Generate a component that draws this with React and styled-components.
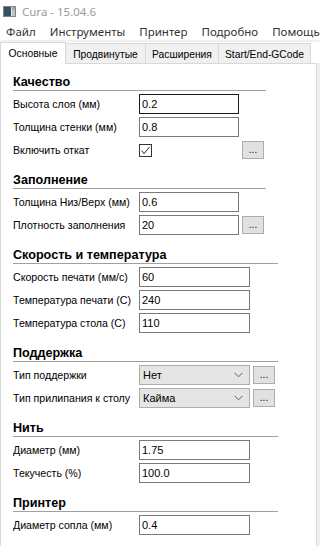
import React from 'react';
import styled, { createGlobalStyle } from 'styled-components';

const Global = createGlobalStyle`
  html, body { margin: 0; padding: 0; background: #fff; overflow: hidden; }
  #root { width: 320px; height: 546px; }
`;

const Window = styled.div`
  width: 320px;
  height: 546px;
  display: flex;
  flex-direction: column;
  background: #fff;
  overflow: hidden;
  font-family: "Liberation Sans", Arial, sans-serif;
`;

const TitleBar = styled.div`
  height: 22px;
  flex-shrink: 0;
  display: flex;
  align-items: center;
  gap: 6px;
  padding-left: 3px;
`;

const TitleText = styled.span`
  font-family: "Noto Sans", sans-serif;
  font-size: 11.5px;
  color: #9a9a9a;
`;

const MenuBar = styled.div`
  height: 18px;
  flex-shrink: 0;
  display: flex;
  align-items: center;
  gap: 14px;
  padding-left: 6px;
  white-space: nowrap;
  overflow: hidden;
`;

const MenuItem = styled.span`
  font-family: "Noto Sans", sans-serif;
  font-size: 11.5px;
  color: #333;
`;

const Separator = styled.div`
  height: 2px;
  flex-shrink: 0;
  background: #f0f0f0;
`;

const TabRow = styled.div`
  height: 21px;
  flex-shrink: 0;
  display: flex;
  align-items: flex-end;
  position: relative;
  z-index: 1;
`;

const Tab = styled.div`
  box-sizing: border-box;
  width: ${p => p.$w}px;
  height: ${p => (p.$active ? 22 : 20)}px;
  margin-bottom: ${p => (p.$active ? -1 : 0)}px;
  background: ${p => (p.$active ? '#fff' : '#f0f0f0')};
  border: 1px solid #d9d9d9;
  border-bottom: none;
  border-left: ${p => (p.$first ? '1px solid #d9d9d9' : 'none')};
  display: flex;
  align-items: center;
  justify-content: center;
  font-size: 10.3px;
  color: #000;
  white-space: nowrap;
  padding-top: ${p => (p.$active ? 0 : 1)}px;
`;

const Body = styled.div`
  flex: 1;
  display: flex;
  background: #f0f0f0;
  min-height: 0;
`;

const Panel = styled.div`
  box-sizing: border-box;
  width: 317px;
  background: #fff;
  border: 1px solid #d9d9d9;
  border-bottom: none;
  padding: 10px 0 0 12px;
  display: flex;
  flex-direction: column;
  gap: 12px;
`;

const Section = styled.section`
  display: flex;
  flex-direction: column;
`;

const SectionTitle = styled.div`
  height: 16px;
  line-height: 16px;
  font-weight: bold;
  font-size: 12.6px;
  color: #000;
  white-space: nowrap;
`;

const Rule = styled.div`
  width: ${p => p.$w}px;
  height: 1px;
  background: #a0a0a0;
`;

const Rows = styled.div`
  margin-top: 3px;
  display: flex;
  flex-direction: column;
  gap: 3px;
`;

const Row = styled.div`
  height: 20px;
  display: flex;
  align-items: center;
`;

const Label = styled.span`
  width: 126px;
  flex-shrink: 0;
  font-size: 10.6px;
  color: #000;
  white-space: nowrap;
  overflow: hidden;
`;

const Field = styled.input`
  box-sizing: border-box;
  width: ${p => p.$w}px;
  height: 20px;
  margin: 0;
  padding: 0 2px;
  border: 1px solid ${p => (p.$focus ? '#1a1a1a' : '#7a7a7a')};
  border-radius: 0;
  outline: none;
  background: #fff;
  font-family: "Liberation Sans", Arial, sans-serif;
  font-size: 11px;
  color: #000;
`;

const Slot = styled.div`
  width: ${p => p.$w}px;
  height: 20px;
  display: flex;
  align-items: center;
`;

const CheckBox = styled.div`
  box-sizing: border-box;
  width: 13px;
  height: 13px;
  border: 1px solid #333;
  background: #fff;
  display: flex;
  align-items: center;
  justify-content: center;
`;

const Select = styled.div`
  box-sizing: border-box;
  width: ${p => p.$w}px;
  height: 20px;
  border: 1px solid #adadad;
  background: #e5e5e5;
  display: flex;
  align-items: center;
  justify-content: space-between;
  padding: 0 6px 0 3px;
  font-size: 11px;
  color: #000;
`;

const DotsButton = styled.div`
  box-sizing: border-box;
  width: 22px;
  height: 18px;
  margin-left: 3px;
  border: 1px solid #adadad;
  background: #e1e1e1;
  display: flex;
  align-items: flex-end;
  justify-content: center;
  font-size: 10px;
  color: #000;
  line-height: 1;
  padding-bottom: 3px;
`;

const AppIcon = () => (
  <svg width="13" height="11" viewBox="0 0 13 11">
    <rect x="0.5" y="0.5" width="12" height="10" fill="#e6e9ea" stroke="#7f8487" />
    <rect x="1" y="1" width="7" height="9" fill="#36505e" />
    <rect x="9" y="1" width="3" height="3" fill="#8fb59a" />
    <rect x="9" y="4" width="3" height="6" fill="#b9c4c9" />
  </svg>
);

const Check = () => (
  <svg width="11" height="11" viewBox="0 0 11 11">
    <polyline points="1.5,5.5 4,8.5 9.5,2" fill="none" stroke="#4a4a4a" strokeWidth="1.1" />
  </svg>
);

const Chevron = () => (
  <svg width="9" height="6" viewBox="0 0 9 6">
    <polyline points="0.5,0.8 4.5,4.8 8.5,0.8" fill="none" stroke="#606060" strokeWidth="1" />
  </svg>
);

const Dots = () => <DotsButton>...</DotsButton>;

const sections = [
  {
    title: 'Качество',
    w: 100,
    rule: 253,
    rows: [
      { label: 'Высота слоя (мм)', value: '0.2', focus: true },
      { label: 'Толщина стенки (мм)', value: '0.8' },
      { label: 'Включить откат', check: true, dots: true },
    ],
  },
  {
    title: 'Заполнение',
    w: 100,
    rule: 253,
    rows: [
      { label: 'Толщина Низ/Верх (мм)', value: '0.6' },
      { label: 'Плотность заполнения', value: '20', dots: true },
    ],
  },
  {
    title: 'Скорость и температура',
    w: 111,
    rule: 265,
    rows: [
      { label: 'Скорость печати (мм/с)', value: '60' },
      { label: 'Температура печати (C)', value: '240' },
      { label: 'Температура стола (C)', value: '110' },
    ],
  },
  {
    title: 'Поддержка',
    w: 111,
    rule: 265,
    rows: [
      { label: 'Тип поддержки', select: 'Нет', dots: true },
      { label: 'Тип прилипания к столу', select: 'Кайма', dots: true },
    ],
  },
  {
    title: 'Нить',
    w: 111,
    rule: 265,
    rows: [
      { label: 'Диаметр (мм)', value: '1.75' },
      { label: 'Текучесть (%)', value: '100.0' },
    ],
  },
  {
    title: 'Принтер',
    w: 111,
    rule: 265,
    rows: [{ label: 'Диаметр сопла (мм)', value: '0.4' }],
  },
];

const tabs = [
  { name: 'Основные', w: 66, active: true },
  { name: 'Продвинутые', w: 80 },
  { name: 'Расширения', w: 73 },
  { name: 'Start/End-GCode', w: 92 },
];

export default function App() {
  return (
    <Window>
      <Global />
      <TitleBar>
        <AppIcon />
        <TitleText>Cura - 15.04.6</TitleText>
      </TitleBar>
      <MenuBar>
        {['Файл', 'Инструменты', 'Принтер', 'Подробно', 'Помощь'].map(m => (
          <MenuItem key={m}>{m}</MenuItem>
        ))}
      </MenuBar>
      <Separator />
      <TabRow>
        {tabs.map((t, i) => (
          <Tab key={t.name} $w={t.w} $active={t.active} $first={i === 0}>
            {t.name}
          </Tab>
        ))}
      </TabRow>
      <Body>
        <Panel>
          {sections.map(s => (
            <Section key={s.title}>
              <SectionTitle>{s.title}</SectionTitle>
              <Rule $w={s.rule} />
              <Rows>
                {s.rows.map(r => (
                  <Row key={r.label}>
                    <Label>{r.label}</Label>
                    {r.value !== undefined && (
                      <Field $w={s.w} $focus={r.focus} readOnly defaultValue={r.value} />
                    )}
                    {r.check && (
                      <Slot $w={s.w}>
                        <CheckBox>
                          <Check />
                        </CheckBox>
                      </Slot>
                    )}
                    {r.select && (
                      <Select $w={s.w}>
                        <span>{r.select}</span>
                        <Chevron />
                      </Select>
                    )}
                    {r.dots && <Dots />}
                  </Row>
                ))}
              </Rows>
            </Section>
          ))}
        </Panel>
      </Body>
    </Window>
  );
}
